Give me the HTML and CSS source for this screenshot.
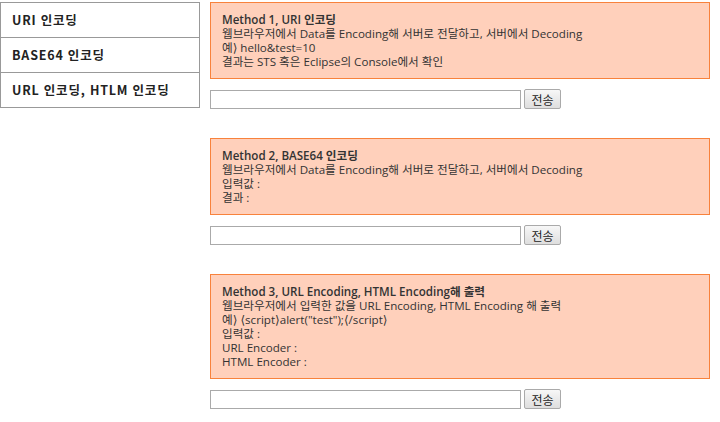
FILE: index.html
```html
<!DOCTYPE html>
<html lang="ko">

<head>
    <meta charset="UTF-8">
    <title>Encoding</title>
    <link rel="stylesheet" href="styles.css">
</head>

<body>
    <div id="wrap">
        <ul id="menu">
            <li>URI 인코딩</li>
            <li>BASE64 인코딩</li>
            <li>URL 인코딩, HTLM 인코딩</li>
        </ul>

        <div id="content">
            <!-- method 1 -->
            <div class="method">
                <div class="info">
                    <b>Method 1, URI 인코딩</b><br>
                    웹브라우저에서 Data를 Encoding해 서버로 전달하고, 서버에서 Decoding<br>
                    예<span class="br">⟩</span> hello&amp;test=10<br>
                    결과는 STS 혹은 Eclipse의 Console에서 확인
                </div>
                <form class="send">
                    <input type="text"><button type="button">전송</button>
                </form>
            </div>

            <!-- method 2 -->
            <div class="method">
                <div class="info">
                    <b>Method 2, BASE64 인코딩</b><br>
                    웹브라우저에서 Data를 Encoding해 서버로 전달하고, 서버에서 Decoding<br>
                    입력값 :<br>
                    결과 :
                </div>
                <form class="send">
                    <input type="text"><button type="button">전송</button>
                </form>
            </div>

            <!-- method 3 -->
            <div class="method">
                <div class="info">
                    <b>Method 3, URL Encoding, HTML Encoding해 출력</b><br>
                    웹브라우저에서 입력한 값을 URL Encoding, HTML Encoding 해 출력<br>
                    예<span class="br">⟩</span> <span class="br">⟨</span>script<span class="br">⟩</span>alert("test");<span class="br">⟨</span>/script<span class="br">⟩</span><br>
                    입력값 :<br>
                    URL Encoder :<br>
                    HTML Encoder :
                </div>
                <form class="send">
                    <input type="text"><button type="button">전송</button>
                </form>
            </div>
        </div>
    </div>
</body>

</html>
```

FILE: styles.css
```css
body {
    margin: 0;
    padding-top: 2px;
    background: #fff;
}

#wrap {
    display: flex;
    align-items: flex-start;
}

/* left menu */
#menu {
    list-style: none;
    margin: 0;
    padding: 0;
    width: 200px;
    box-sizing: border-box;
    border: 1px solid #999;
    border-bottom: none;
}

#menu li {
    height: 34px;
    line-height: 34px;
    padding-left: 11px;
    border-bottom: 1px solid #999;
    font-family: "Noto Sans CJK KR", sans-serif;
    font-weight: bold;
    font-size: 12.5px;
    letter-spacing: 0.8px;
    color: #222;
}

/* right content */
#content {
    margin-left: 10px;
    width: 500px;
}

.method {
    margin-bottom: 29px;
}

.info {
    background: #ffd0bb;
    border: 1px solid #f8823c;
    padding: 10px 11px 9px;
    font-family: "Open Sans", "Noto Sans CJK KR", sans-serif;
    font-size: 11.6px;
    line-height: 14px;
    color: #333;
}

.info b {
    font-weight: 600;
}

.info .br {
    font-family: "DejaVu Sans", sans-serif;
    font-size: 12px;
}

.send {
    margin: 11px 0 0;
    display: flex;
    align-items: flex-start;
    height: 19px;
}

.send input {
    width: 311px;
    height: 19px;
    box-sizing: border-box;
    border: 1px solid #aaa;
    margin: 0;
    padding: 1px 2px;
}

.send button {
    margin-left: 3px;
    width: 37px;
    height: 20px;
    margin-top: -1px;
    box-sizing: border-box;
    border: 1px solid #aaa;
    border-radius: 2px;
    background: linear-gradient(#f7f7f7, #dedede);
    font-family: "Noto Sans CJK KR", sans-serif;
    font-size: 12px;
    color: #222;
    padding: 0;
    line-height: 17px;
}
```
